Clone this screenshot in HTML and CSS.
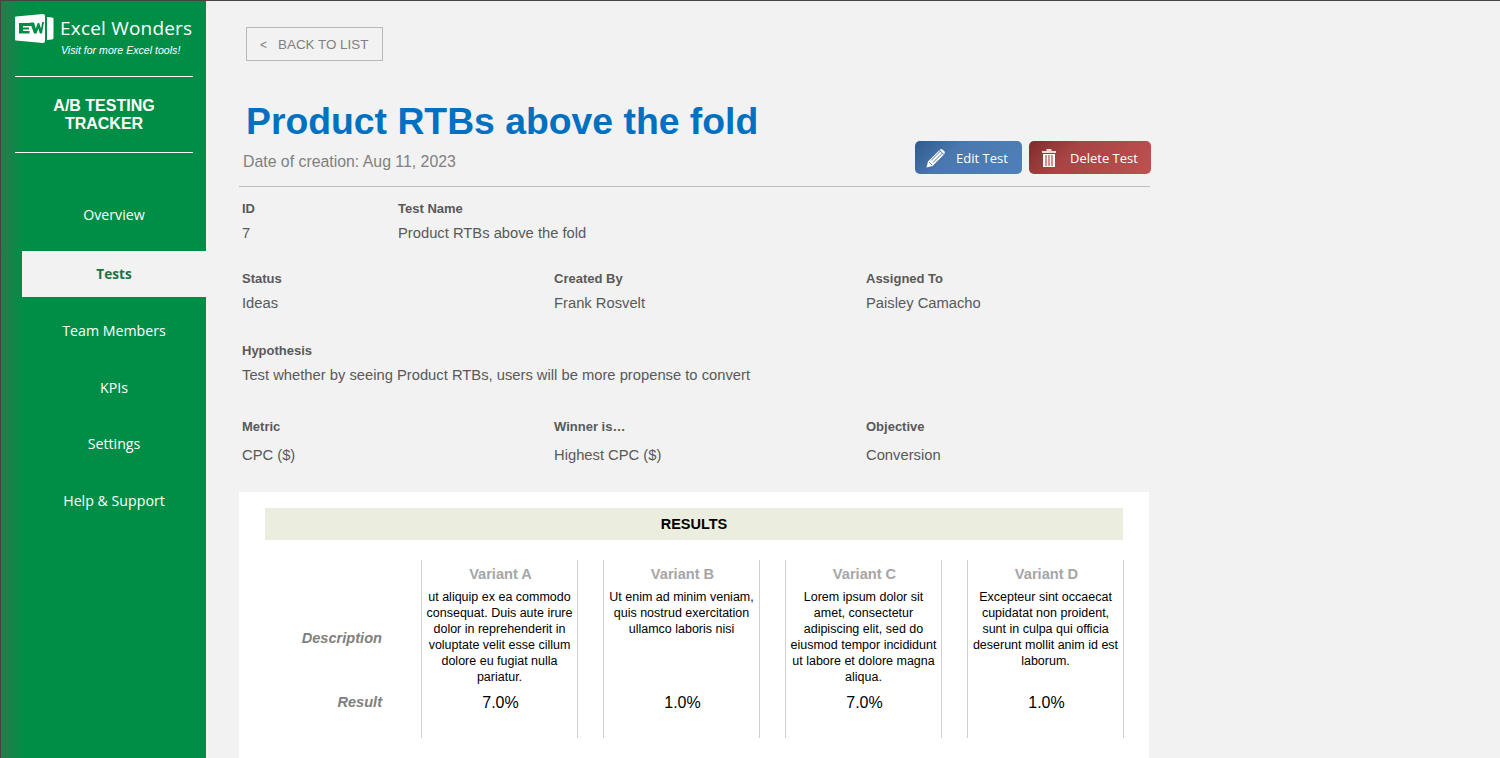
FILE: index.html
```html
<!DOCTYPE html>
<html lang="en">
<head>
<meta charset="utf-8">
<title>A/B Testing Tracker</title>
<link rel="stylesheet" href="styles.css">
</head>
<body>
<div class="app">
  <aside class="sidebar">
    <div class="brand">
      <div class="brand-row">
        <svg class="logo" width="39" height="29" viewBox="0 0 39 29">
          <path d="M1 2.5 L28 0 Q30 0 30 2 V27 Q30 29 28 29 L1 26.5 Q0 26.4 0 25.5 V3.5 Q0 2.6 1 2.5 Z" fill="#fff"/>
          <path d="M32 3 L37 3.5 Q38.5 3.7 38.5 5 V24 Q38.5 25.3 37 25.5 L32 26 Z" fill="#fff"/>
          <path d="M4 9 H17 V12 H8 V13.5 H14 V15.5 H8 V17 H14.5 V19.5 H4 Z" fill="#008e46"/>
          <path d="M15 8.5 H19 L20.8 14.5 L22.7 9 H24.2 L26 14.5 L27.2 8 H29 L27 19.5 H24.8 L23.4 14.5 L21.5 19.5 H19 Z" fill="#008e46"/>
        </svg>
        <span class="brand-name">Excel Wonders</span>
      </div>
      <div class="brand-tag">Visit for more Excel tools!</div>
    </div>
    <div class="app-title">A/B TESTING<br>TRACKER</div>
    <nav class="nav">
      <a class="nav-item">Overview</a>
      <a class="nav-item nav-active">Tests</a>
      <a class="nav-item">Team Members</a>
      <a class="nav-item">KPIs</a>
      <a class="nav-item">Settings</a>
      <a class="nav-item">Help &amp; Support</a>
    </nav>
  </aside>
  <main class="main">
    <a class="back"><span class="chev">&lt;</span>BACK TO LIST</a>
    <h1 class="title">Product RTBs above the fold</h1>
    <div class="subhead">
      <div class="date">Date of creation: Aug 11, 2023</div>
      <div class="actions">
        <a class="btn btn-edit">
          <svg class="btn-icon" width="20" height="20" viewBox="0 0 20 20"><path d="M0.5 19.5 L2 13.5 L13.5 2 Q15 0.5 16.5 1.5 L18.5 3.5 Q19.5 5 18 6.5 L6.5 18 Z" fill="#fff"/><path d="M3 14 L6 17 M5 12.5 L14.5 3 M7 14.5 L16.5 5 M13 1.8 L18 6.8" stroke="#4a78ae" stroke-width="1" fill="none"/></svg>
          <span>Edit Test</span>
        </a>
        <a class="btn btn-delete">
          <svg class="btn-icon" width="14" height="18" viewBox="0 0 14 18"><path d="M0 2 H4.5 V0 H9.5 V2 H14 V4 H0 Z" fill="#f6d8d8"/><path d="M1 5 H13 V18 H1 Z" fill="#fff"/><path d="M4 6 V17 M7 6 V17 M10 6 V17" stroke="#b04848" stroke-width="1.2"/></svg>
          <span>Delete Test</span>
        </a>
      </div>
    </div>
    <section class="fields">
      <div class="row row-id">
        <div class="field"><div class="label">ID</div><div class="value">7</div></div>
        <div class="field"><div class="label">Test Name</div><div class="value">Product RTBs above the fold</div></div>
      </div>
      <div class="row row-three">
        <div class="field"><div class="label">Status</div><div class="value">Ideas</div></div>
        <div class="field"><div class="label">Created By</div><div class="value">Frank Rosvelt</div></div>
        <div class="field"><div class="label">Assigned To</div><div class="value">Paisley Camacho</div></div>
      </div>
      <div class="row row-hyp">
        <div class="field"><div class="label">Hypothesis</div><div class="value">Test whether by seeing Product RTBs, users will be more propense to convert</div></div>
      </div>
      <div class="row row-three row-metric">
        <div class="field"><div class="label">Metric</div><div class="value">CPC ($)</div></div>
        <div class="field"><div class="label">Winner is…</div><div class="value">Highest CPC ($)</div></div>
        <div class="field"><div class="label">Objective</div><div class="value">Conversion</div></div>
      </div>
    </section>
    <section class="panel">
      <div class="results-bar">RESULTS</div>
      <div class="variants">
        <div class="row-labels">
          <div class="rl-desc">Description</div>
          <div class="rl-result">Result</div>
        </div>
        <div class="variant">
          <div class="v-name">Variant A</div>
          <div class="v-desc">ut aliquip ex ea commodo consequat. Duis aute irure dolor in reprehenderit in voluptate velit esse cillum dolore eu fugiat nulla pariatur.</div>
          <div class="v-result">7.0%</div>
        </div>
        <div class="variant">
          <div class="v-name">Variant B</div>
          <div class="v-desc">Ut enim ad minim veniam, quis nostrud exercitation ullamco laboris nisi</div>
          <div class="v-result">1.0%</div>
        </div>
        <div class="variant">
          <div class="v-name">Variant C</div>
          <div class="v-desc">Lorem ipsum dolor sit amet, consectetur adipiscing elit, sed do eiusmod tempor incididunt ut labore et dolore magna aliqua.</div>
          <div class="v-result">7.0%</div>
        </div>
        <div class="variant">
          <div class="v-name">Variant D</div>
          <div class="v-desc">Excepteur sint occaecat cupidatat non proident, sunt in culpa qui officia deserunt mollit anim id est laborum.</div>
          <div class="v-result">1.0%</div>
        </div>
      </div>
    </section>
  </main>
</div>
</body>
</html>
```
FILE: styles.css
```css
* { box-sizing: border-box; }
html, body { margin: 0; height: 100%; overflow: hidden; }
body { font-family: "Liberation Sans", Arial, sans-serif; background: #f2f2f2; }
.app { display: flex; height: 758px; border-top: 1px solid #444; border-left: 1px solid #444; }

.sidebar {
  width: 205px; flex: none; color: #fff; padding-top: 14px;
  background: linear-gradient(90deg, #2a7a4c 0, #008e46 22px);
}
.brand { margin: 0 13px 0 14px; height: 63px; border-bottom: 1px solid #fff; }
.brand-row { display: flex; align-items: center; gap: 6px; margin-top: -1px; height: 29px; }
.logo { display: block; flex: none; }
.brand-name { font-family: "Open Sans", sans-serif; font-size: 19px; line-height: 24px; letter-spacing: 0.2px; white-space: nowrap; margin-top: -2px; }
.brand-tag { font-size: 10.6px; font-style: italic; margin: 1px 0 0 46px; line-height: 12px; white-space: nowrap; }
.app-title {
  margin: 0 13px 0 14px; height: 76px; padding-top: 20px; border-bottom: 1px solid #fff;
  font-size: 16px; font-weight: 700; line-height: 18px; text-align: center;
}
.nav { margin-top: 33px; font-family: "Open Sans", sans-serif; font-size: 14.2px; }
.nav-item { display: block; height: 56.67px; line-height: 57px; margin-left: 21px; text-align: center; }
.nav-item:first-child { height: 65px; line-height: 58px; }
.nav-active { height: 46px; line-height: 46px; background: #f2f2f2; color: #1e7145; font-size: 13.6px; font-weight: 700; margin-bottom: 5px; }

.main { flex: 1; min-width: 0; padding: 26px 0 0 33px; }
.back {
  display: block; width: 137px; height: 34px; margin-left: 7px; border: 1px solid #b8b8b8;
  color: #808080; font-size: 13.4px; line-height: 33px; padding-left: 13px; white-space: nowrap;
}
.chev { font-size: 12px; margin-right: 11px; }
.title { margin: 41px 0 0 7px; font-size: 37.35px; line-height: 38px; font-weight: 700; color: #0070c0; white-space: nowrap; }
.subhead { display: flex; width: 911px; height: 47px; justify-content: space-between; border-bottom: 1px solid #bfbfbf; padding: 0 0 0 4px; }
.date { font-size: 15.85px; line-height: 22px; color: #808080; padding-top: 11px; }
.actions { display: flex; gap: 7px; margin: 1px -1px 0 0; }
.btn { display: flex; align-items: center; height: 33px; border-radius: 5px; color: #fff; font-family: "Open Sans", sans-serif; font-size: 13px; white-space: nowrap; }
.btn span { padding-top: 1px; }
.btn-edit { width: 107px; padding-left: 11px; gap: 10px; background: linear-gradient(135deg, #2f5a8c 0, #4a78ae 35%, #5080b8 100%); }
.btn-delete { width: 122px; padding-left: 13px; gap: 14px; background: linear-gradient(135deg, #7f2c2c 0, #a84444 35%, #c05050 100%); }
.btn-icon { display: block; flex: none; }

.fields { width: 911px; padding: 13px 0 0 3px; }
.row { display: grid; }
.row-id { grid-template-columns: 156px 1fr; height: 70px; }
.row-three { grid-template-columns: repeat(3, 312px); height: 72px; }
.row-hyp { height: 76px; }
.label { font-size: 13px; font-weight: 700; color: #595959; line-height: 18px; }
.value { font-size: 14.75px; color: #595959; line-height: 18px; margin-top: 6px; }
.row-metric .value { margin-top: 10px; }
.row-metric { height: 74px; }

.panel { width: 910px; height: 300px; background: #fff; padding: 16px 26px 0; }
.results-bar { height: 32px; background: #ebeedf; color: #000; font-size: 14.5px; font-weight: 700; line-height: 32px; text-align: center; }
.variants { display: flex; margin-top: 20px; height: 178px; gap: 25px; }
.row-labels { width: 156px; margin-right: -25px; font-size: 14.6px; font-weight: 700; font-style: italic; color: #808080; text-align: right; flex: none; padding-right: 39px; }
.rl-desc { margin-top: 69px; line-height: 18px; }
.rl-result { margin-top: 46px; line-height: 18px; }
.variant { width: 157px; flex: none; border-left: 1px solid #d0d0d0; border-right: 1px solid #d0d0d0; text-align: center; display: flex; flex-direction: column; padding: 0 3px; }
.v-name { font-size: 14.6px; font-weight: 700; color: #a6a6a6; line-height: 18px; margin: 5px 0 0 2px; }
.v-desc { font-size: 12.5px; line-height: 16px; color: #000; height: 96px; margin-top: 6px; }
.v-result { font-size: 16px; color: #000; line-height: 20px; margin: 8px 0 0 2px; }
```
